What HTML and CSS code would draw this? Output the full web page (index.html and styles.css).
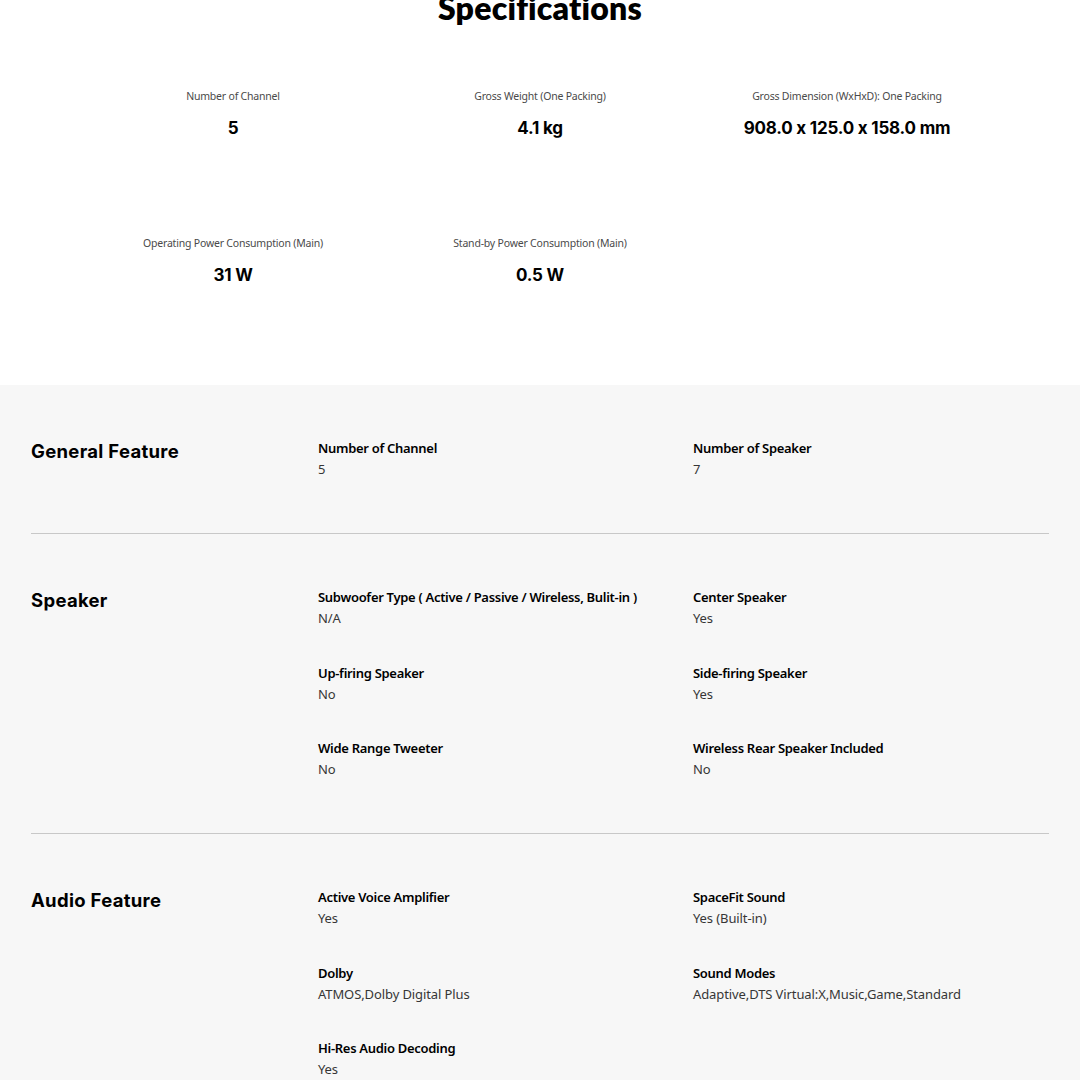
FILE: index.html
```html
<!DOCTYPE html>
<html lang="en">
<head>
<meta charset="utf-8">
<title>Specifications</title>
<link rel="stylesheet" href="styles.css">
</head>
<body>
<section class="summary">
  <h2 class="title">Specifications</h2>
  <div class="summary-grid">
    <div class="sum-item"><div class="sum-label">Number of Channel</div><div class="sum-value">5</div></div>
    <div class="sum-item"><div class="sum-label">Gross Weight (One Packing)</div><div class="sum-value">4.1 kg</div></div>
    <div class="sum-item"><div class="sum-label">Gross Dimension (WxHxD): One Packing</div><div class="sum-value">908.0 x 125.0 x 158.0 mm</div></div>
    <div class="sum-item"><div class="sum-label">Operating Power Consumption (Main)</div><div class="sum-value">31 W</div></div>
    <div class="sum-item"><div class="sum-label">Stand-by Power Consumption (Main)</div><div class="sum-value">0.5 W</div></div>
  </div>
</section>
<section class="detail">
  <div class="group">
    <h3 class="group-title">General Feature</h3>
    <div class="items">
      <div class="item"><div class="label">Number of Channel</div><div class="value">5</div></div>
      <div class="item"><div class="label">Number of Speaker</div><div class="value">7</div></div>
    </div>
  </div>
  <div class="group">
    <h3 class="group-title">Speaker</h3>
    <div class="items">
      <div class="item"><div class="label">Subwoofer Type ( Active / Passive / Wireless, Bulit-in )</div><div class="value">N/A</div></div>
      <div class="item"><div class="label">Center Speaker</div><div class="value">Yes</div></div>
      <div class="item"><div class="label">Up-firing Speaker</div><div class="value">No</div></div>
      <div class="item"><div class="label">Side-firing Speaker</div><div class="value">Yes</div></div>
      <div class="item"><div class="label">Wide Range Tweeter</div><div class="value">No</div></div>
      <div class="item"><div class="label">Wireless Rear Speaker Included</div><div class="value">No</div></div>
    </div>
  </div>
  <div class="group">
    <h3 class="group-title">Audio Feature</h3>
    <div class="items">
      <div class="item"><div class="label">Active Voice Amplifier</div><div class="value">Yes</div></div>
      <div class="item"><div class="label">SpaceFit Sound</div><div class="value">Yes (Built-in)</div></div>
      <div class="item"><div class="label">Dolby</div><div class="value">ATMOS,Dolby Digital Plus</div></div>
      <div class="item"><div class="label">Sound Modes</div><div class="value">Adaptive,DTS Virtual:X,Music,Game,Standard</div></div>
      <div class="item"><div class="label">Hi-Res Audio Decoding</div><div class="value">Yes</div></div>
    </div>
  </div>
</section>
</body>
</html>
```

FILE: styles.css
```css
html, body {
  margin: 0;
  padding: 0;
  background: #ffffff;
  color: #000;
}
body {
  font-family: "Noto Sans", "Open Sans", sans-serif;
}
.summary {
  background: #fff;
  height: 385px;
  overflow: hidden;
}
.title {
  margin: -12px 0 0;
  font-family: "Lato", "Inter", sans-serif;
  font-weight: 800;
  font-size: 32px;
  line-height: 40px;
  text-align: center;
  color: #000;
  letter-spacing: 0.2px;
}
.summary-grid {
  display: grid;
  grid-template-columns: repeat(3, 307px);
  justify-content: center;
  grid-auto-rows: 147px;
  margin-top: 61px;
}
.sum-item {
  text-align: center;
}
.sum-label {
  font-size: 10.5px;
  line-height: 14px;
  color: #4a4a4a;
  letter-spacing: -0.2px;
}
.sum-value {
  margin-top: 13px;
  font-family: "Inter", "Lato", sans-serif;
  font-weight: 700;
  font-size: 17px;
  line-height: 24px;
  color: #000;
  letter-spacing: -0.2px;
}
.detail {
  background: #f7f7f7;
  padding: 0 31px;
}
.group {
  display: grid;
  grid-template-columns: 287px 1fr;
  padding: 53px 0 53px;
  border-bottom: 1px solid #c8c8c8;
}
.group-title {
  margin: 0;
  padding-top: 1px;
  font-family: "Inter", "Lato", sans-serif;
  font-weight: 700;
  font-size: 18.5px;
  line-height: 24px;
  color: #000;
  letter-spacing: 0.3px;
}
.items {
  display: grid;
  grid-template-columns: 375px 1fr;
  row-gap: 33.5px;
}
.label {
  font-size: 13px;
  font-weight: 600;
  line-height: 21px;
  color: #000;
  letter-spacing: -0.3px;
}
.value {
  font-size: 13px;
  line-height: 21px;
  color: #363636;
  letter-spacing: -0.1px;
}
```
